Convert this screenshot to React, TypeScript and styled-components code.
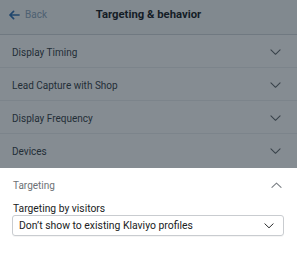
import React from "react";
import styled, { createGlobalStyle } from "styled-components";

const Global = createGlobalStyle`
  html, body { margin: 0; padding: 0; background: #ffffff; }
  body { font-family: Roboto, Inter, "Liberation Sans", sans-serif; -webkit-font-smoothing: antialiased; }
  * { box-sizing: border-box; }
`;

const Screen = styled.div`
  width: 297px;
  height: 260px;
  display: flex;
  flex-direction: column;
  overflow: hidden;
  background: #ffffff;
`;

const Dimmed = styled.div`
  position: relative;
  display: flex;
  flex-direction: column;
  height: 168px;
  flex: none;
`;

const Backdrop = styled.div`
  position: absolute;
  inset: 0;
  background: rgba(24, 38, 50, 0.53);
  pointer-events: none;
`;

const Header = styled.header`
  height: 35px;
  flex: none;
  display: grid;
  grid-template-columns: 1fr auto 1fr;
  align-items: center;
  padding: 0 9px 5px;
  border-bottom: 1px solid #d3d7da;
  box-shadow: 0 1px 0 #eceef0;
  background: #f7f8f9;
`;

const BackLink = styled.a`
  display: flex;
  align-items: center;
  gap: 5px;
  color: #8aa3b9;
  font-size: 10px;
  text-decoration: none;
  justify-self: start;
`;

const Title = styled.h1`
  margin: 0;
  font-size: 11.3px;
  font-weight: 700;
  color: #101316;
`;

const Row = styled.div<{ $last?: boolean }>`
  height: 33px;
  flex: none;
  display: flex;
  align-items: center;
  justify-content: space-between;
  padding: 2px 16px 0 12px;
  border-bottom: ${(p) => (p.$last ? "none" : "1px solid #eceef0")};
  background: #ffffff;
`;

const RowLabel = styled.span`
  font-size: 10px;
  color: #30373d;
`;

const Sheet = styled.section`
  flex: 1;
  display: flex;
  flex-direction: column;
  padding: 10px 15px 0 13px;
`;

const SheetHead = styled.div`
  display: flex;
  align-items: center;
  justify-content: space-between;
  height: 15px;
`;

const SheetTitle = styled.span`
  font-size: 10px;
  color: #6d7175;
`;

const FieldLabel = styled.label`
  margin-top: 9px;
  font-size: 10.3px;
  color: #202223;
  line-height: 13px;
`;

const Select = styled.div`
  margin: 0 -2px 0 -1px;
  height: 21px;
  border: 1px solid #c9ccd0;
  border-radius: 3px;
  display: flex;
  align-items: center;
  justify-content: space-between;
  padding: 0 9px 0 6px;
  font-size: 10.4px;
  color: #202223;
  box-shadow: 0 1px 0 rgba(0,0,0,0.04);
`;

const Chevron = ({ up, color = "#5c6166", w = 11 }: { up?: boolean; color?: string; w?: number }) => (
  <svg width={w} height={w * 0.58} viewBox="0 0 12 7" fill="none">
    <path
      d={up ? "M1 6L6 1.2L11 6" : "M1 1L6 5.8L11 1"}
      stroke={color}
      strokeWidth="1.15"
      strokeLinecap="round"
      strokeLinejoin="round"
    />
  </svg>
);

const rows = ["Display Timing", "Lead Capture with Shop", "Display Frequency", "Devices"];

export default function App() {
  return (
    <Screen>
      <Global />
      <Dimmed>
        <Header>
          <BackLink href="#">
            <svg width="11" height="10" viewBox="0 0 12 10" fill="none">
              <path d="M11 5H1.5M5 1L1 5L5 9" stroke="#2a6bb0" strokeWidth="1.8" strokeLinecap="round" strokeLinejoin="round" />
            </svg>
            Back
          </BackLink>
          <Title>Targeting &amp; behavior</Title>
          <span />
        </Header>
        {rows.map((r, i) => (
          <Row key={r} $last={i === rows.length - 1}>
            <RowLabel>{r}</RowLabel>
            <Chevron />
          </Row>
        ))}
        <Backdrop />
      </Dimmed>
      <Sheet>
        <SheetHead>
          <SheetTitle>Targeting</SheetTitle>
          <Chevron up color="#7a7f84" />
        </SheetHead>
        <FieldLabel>Targeting by visitors</FieldLabel>
        <Select>
          <span>Don’t show to existing Klaviyo profiles</span>
          <Chevron color="#202223" w={10} />
        </Select>
      </Sheet>
    </Screen>
  );
}
